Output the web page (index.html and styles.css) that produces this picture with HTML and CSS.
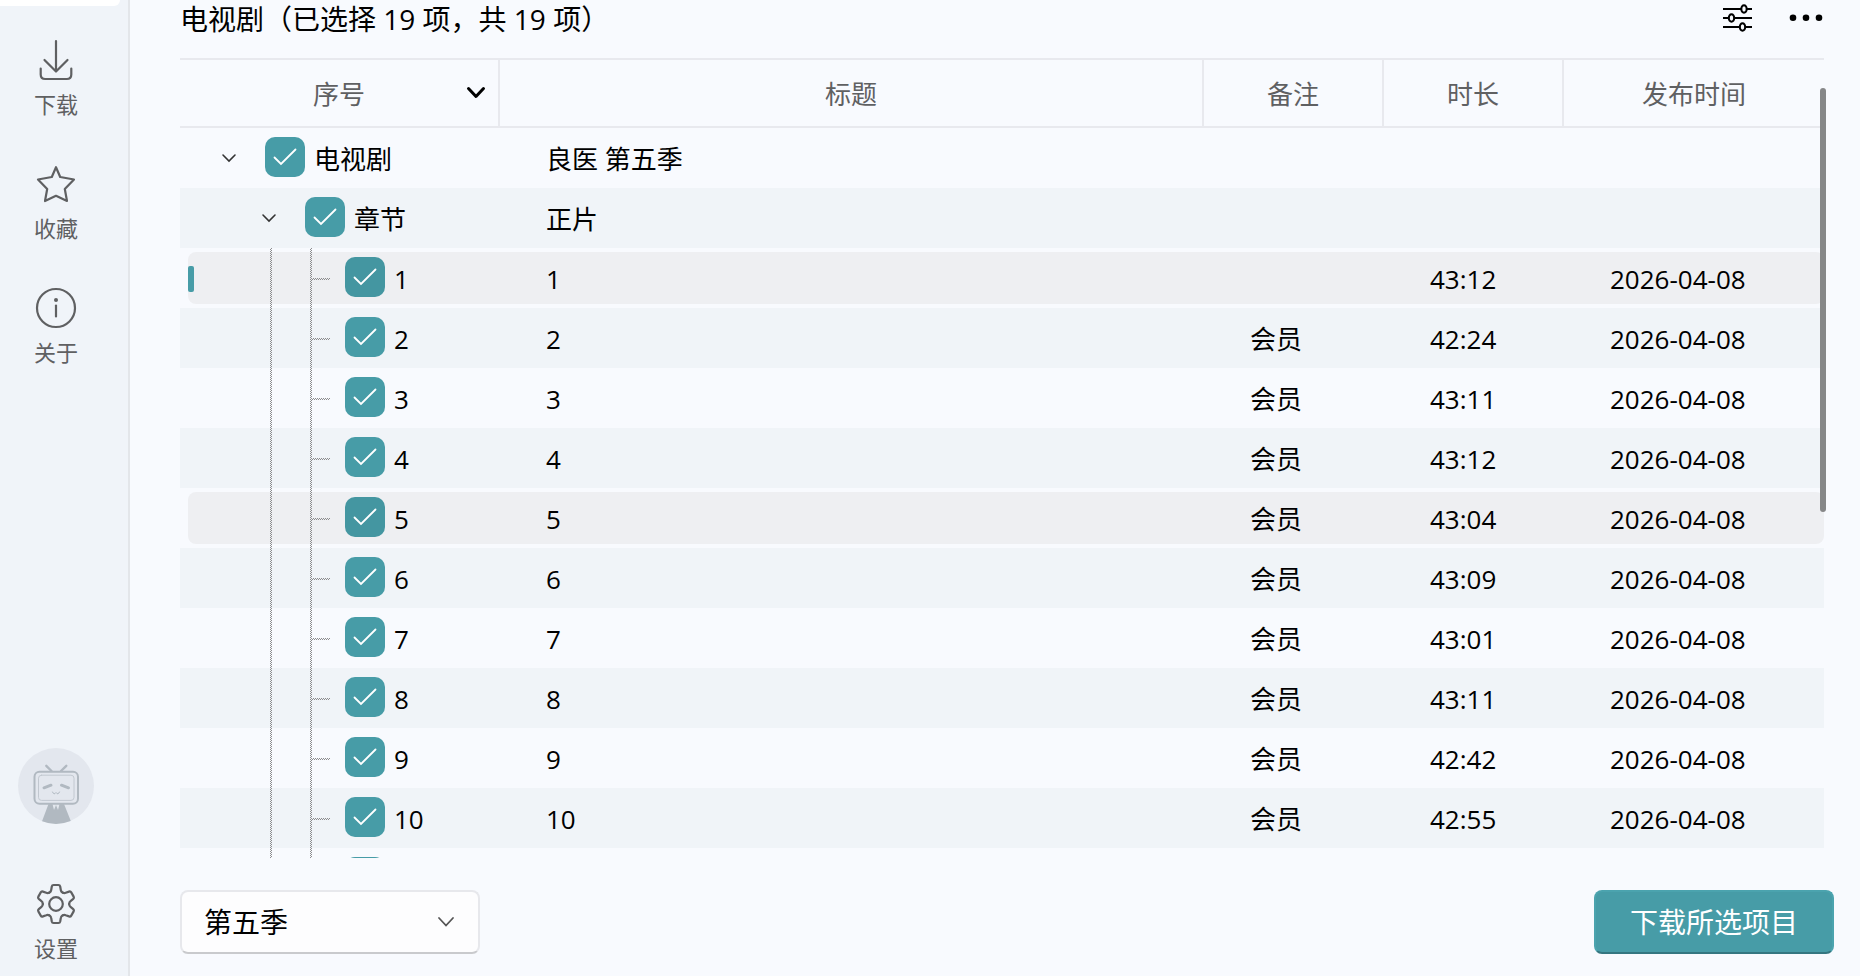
FILE: index.html
```html
<!DOCTYPE html>
<html lang="zh-CN">
<head>
<meta charset="utf-8">
<title>电视剧</title>
<link rel="stylesheet" href="styles.css">
</head>
<body>
<div class="app">
  <nav class="sidebar">
    <div class="nav-active"></div>
    <div class="nav-group">
      <button class="nav-item" type="button">
        <svg class="nav-icon" viewBox="0 0 40 40"><path d="M20 1V31M8.500 20 20 31.500 31.500 20M4.700 28.500V34.500Q4.700 39 9.200 39H30.800Q35.300 39 35.300 34.500V28.500"/></svg>
        <span>下载</span>
      </button>
      <button class="nav-item" type="button">
        <svg class="nav-icon" viewBox="0 0 40 40"><path d="M20 3.200 24.200 13 38 15.500 28.800 25 31 37 20 31.800 9 37 11.200 25 2 15.500 15.800 13Z"/></svg>
        <span>收藏</span>
      </button>
      <button class="nav-item" type="button">
        <svg class="nav-icon" viewBox="0 0 40 40"><circle cx="20" cy="20" r="19"/><circle class="solid" cx="20" cy="12" r="2"/><path d="M20 17.500V28.500"/></svg>
        <span>关于</span>
      </button>
    </div>
    <div class="nav-bottom">
      <button class="avatar" type="button" aria-label="账号">
        <svg viewBox="0 0 76 76">
          <defs><clipPath id="disc"><circle cx="38" cy="38" r="38"/></clipPath></defs>
          <circle cx="38" cy="38" r="38" fill="#e3e7ee"/>
          <g clip-path="url(#disc)" fill="none" stroke="#b1b9c1" stroke-linecap="round" stroke-linejoin="round">
            <path d="M30.500 56 23 76H54L46 56Z" fill="#b1b9c1" stroke="none"/>
            <path d="M34.500 56 36 62 38 57 40 62 41.500 56Z" fill="#e3e7ee" stroke="none"/>
            <path d="M28.300 17.800 33.500 23M48.300 17.800 43 23" stroke-width="2.400"/>
            <rect x="16.500" y="23.700" width="43.500" height="32" rx="5" fill="#e3e7ee" stroke-width="2"/>
            <rect x="20.500" y="27.200" width="35.500" height="25.200" rx="3" stroke-width="1" stroke="#c2c8d0"/>
            <path d="M26 39.800 33 37.200M43.500 37.200 50.500 39.800" stroke-width="3"/>
            <path d="M34.500 44Q36 47.500 38 44.500Q40 47.500 41.500 44" stroke-width="1"/>
          </g>
        </svg>
      </button>
      <button class="nav-item" type="button">
        <svg class="nav-icon" viewBox="-20 -20 40 40">
          <defs><path id="tooth" d="M-6.600-11.400Q-5-12.400-4.800-14L-4.200-17.500Q-3.900-19-2.400-19H2.400Q3.900-19 4.200-17.500L4.800-14Q5-12.400 6.600-11.400"/></defs>
          <use href="#tooth"/><use href="#tooth" transform="rotate(60)"/><use href="#tooth" transform="rotate(120)"/>
          <use href="#tooth" transform="rotate(180)"/><use href="#tooth" transform="rotate(240)"/><use href="#tooth" transform="rotate(300)"/>
          <circle r="6.800"/>
        </svg>
        <span>设置</span>
      </button>
    </div>
  </nav>

  <main class="content">
    <header class="topbar">
      <h1>电视剧（已选择 19 项，共 19 项）</h1>
      <div class="tools">
        <button class="tool" type="button" aria-label="筛选">
          <svg viewBox="0 0 40 32" fill="none" stroke="#000" stroke-width="2"><path d="M8 9H26M32 9H37M8 18H14M19 18H37M8 27H25M30 27H37"/><ellipse cx="29" cy="9" rx="2.700" ry="3.700"/><ellipse cx="16.500" cy="18" rx="2.700" ry="3.700"/><ellipse cx="27.500" cy="27" rx="2.700" ry="3.700"/></svg>
        </button>
        <button class="tool" type="button" aria-label="更多">
          <svg viewBox="0 0 40 32"><circle cx="9" cy="17.700" r="3.300"/><circle cx="22" cy="17.700" r="3.300"/><circle cx="35" cy="17.700" r="3.300"/></svg>
        </button>
      </div>
    </header>

    <section class="list">
      <div class="scroller">
        <table>
          <colgroup><col class="col-index"><col><col class="col-small"><col class="col-small"><col class="col-date"></colgroup>
          <thead>
            <tr>
              <th><span class="sortable">序号<svg class="sort" viewBox="0 0 20 14"><path d="M2.500 2.500 10 10.500 17.500 2.500"/></svg></span></th>
              <th>标题</th><th>备注</th><th>时长</th><th>发布时间</th>
            </tr>
          </thead>
          <tbody id="rows">
            <tr>
              <td><div class="node level-1"><svg class="chevron" viewBox="0 0 16 10"><path d="M2 2 8 8 14 2"/></svg><label><input type="checkbox" checked>电视剧</label></div></td>
              <td>良医 第五季</td><td></td><td></td><td></td>
            </tr>
            <tr>
              <td><div class="node level-2"><svg class="chevron" viewBox="0 0 16 10"><path d="M2 2 8 8 14 2"/></svg><label><input type="checkbox" checked>章节</label></div></td>
              <td>正片</td><td></td><td></td><td></td>
            </tr>
          </tbody>
        </table>
      </div>
      <div class="scrollbar"></div>
    </section>

    <footer class="actions">
      <select aria-label="季"><option>第五季</option></select>
      <button class="primary" type="button">下载所选项目</button>
    </footer>
  </main>
</div>
<script src="app.js"></script>
</body>
</html>
```

FILE: app.js
```js
const date = "2026-04-08";
const episodes = [
  [1, "", "43:12", date, "selected"],
  [2, "会员", "42:24", date],
  [3, "会员", "43:11", date],
  [4, "会员", "43:12", date],
  [5, "会员", "43:04", date, "hovered"],
  [6, "会员", "43:09", date],
  [7, "会员", "43:01", date],
  [8, "会员", "43:11", date],
  [9, "会员", "42:42", date],
  [10, "会员", "42:55", date],
  ["", "", "", ""]
];

document.getElementById("rows").insertAdjacentHTML("beforeend", episodes.map(([number, note, length, day, state = ""]) => `
  <tr class="${state}">
    <td><div class="node level-3"><i class="guide"></i><i class="guide"></i><i class="branch"></i><label><input type="checkbox" checked>${number}</label></div></td>
    <td>${number}</td><td>${note}</td><td>${length}</td><td>${day}</td>
  </tr>`).join(""));
```

FILE: styles.css
```css
:root {
  --accent: #479ca7;
  --page: #f8fafe;
  --panel: #f0f4f9;
  --line: #e8e9ee;
  --muted: #5f6062;
  --dots: repeating-conic-gradient(#8c8c8e 0 25%, transparent 0 50%) 0 0 / 2px 2px;
}

* { box-sizing: border-box; }

body {
  margin: 0;
  overflow: hidden;
  background: var(--page);
  color: #000;
  font: 26px/36px "Open Sans", "Noto Sans CJK SC", sans-serif;
}

button, select { font: inherit; border: 0; padding: 0; background: none; }
svg { display: block; }

.app { display: flex; height: 100vh; }

.sidebar {
  display: flex;
  flex-direction: column;
  flex: none;
  width: 130px;
  padding: 0 16px 12px 0;
  background: var(--panel);
  border-right: 2px solid #e3e6ea;
}

.nav-active {
  width: 120px;
  height: 6px;
  background: #fff;
  border-radius: 0 0 8px 0;
}

.nav-group, .nav-bottom { display: flex; flex-direction: column; align-items: center; }
.nav-group { gap: 44px; padding-top: 34px; }
.nav-bottom { gap: 60px; margin-top: auto; }

.nav-item {
  display: flex;
  flex-direction: column;
  align-items: center;
  gap: 8px;
  color: var(--muted);
  font-size: 22px;
  line-height: 32px;
}

.nav-icon {
  width: 40px;
  height: 40px;
  overflow: visible;
  fill: none;
  stroke: var(--muted);
  stroke-width: 2.2;
  stroke-linecap: round;
  stroke-linejoin: round;
}

.nav-icon .solid { fill: var(--muted); stroke: none; }
.avatar { width: 76px; height: 76px; }

.content {
  display: flex;
  flex-direction: column;
  flex: 1;
  min-width: 0;
  padding: 0 26px 22px 50px;
}

.topbar {
  display: flex;
  justify-content: space-between;
  height: 58px;
  padding-right: 10px;
}

h1 { margin: 0; font-size: 28px; line-height: 38px; font-weight: 400; }
.tools { display: flex; gap: 29px; }
.tool { width: 40px; height: 32px; }

.list {
  position: relative;
  flex: 1;
  min-height: 0;
  margin-right: 10px;
}

.scroller { height: 100%; overflow: hidden; isolation: isolate; }

table {
  width: 100%;
  table-layout: fixed;
  border-collapse: separate;
  border-spacing: 0;
}

.col-index { width: 320px; }
.col-small { width: 180px; }
.col-date { width: 260px; }

th {
  height: 70px;
  padding: 2px 0 0;
  border: solid var(--line);
  border-width: 2px 2px 2px 0;
  color: var(--muted);
  font-weight: 400;
}

th:last-child { border-right: 0; }

.sortable { position: relative; display: block; }

.sort {
  position: absolute;
  top: 10px;
  right: 12px;
  width: 20px;
  height: 14px;
  fill: none;
  stroke: #000;
  stroke-width: 3;
  stroke-linecap: round;
  stroke-linejoin: round;
}

td { height: 60px; padding: 2px 0 0 46px; }
td:first-child { padding: 0; }
tbody tr { position: relative; }
tbody tr:nth-child(even) { background: #f0f4f8; }

.selected td:first-child::before, .hovered td:first-child::before {
  content: "";
  position: absolute;
  z-index: -1;
  inset: 4px 0 4px 8px;
  border-radius: 8px;
  background: #eeeff2;
}

.selected td:first-child::after {
  content: "";
  position: absolute;
  left: 8px;
  top: 18px;
  width: 6px;
  height: 26px;
  border-radius: 2px;
  background: var(--accent);
}

.node { display: flex; align-items: center; height: 60px; }
.level-1 { padding-left: 41px; }
.level-2 { padding-left: 81px; }
.level-3 { padding-left: 90px; }

.chevron {
  width: 16px;
  height: 10px;
  margin-right: 28px;
  fill: none;
  stroke: #333;
  stroke-width: 1.6;
  stroke-linecap: round;
}

.guide { width: 2px; height: 60px; background: var(--dots); }
.guide + .guide { margin-left: 38px; }
.branch { width: 18px; height: 2px; margin: 2px 15px 0 0; background: var(--dots); }

.node label { display: flex; align-items: flex-end; gap: 9px; height: 40px; margin-bottom: 2px; }

input {
  appearance: none;
  width: 40px;
  height: 40px;
  margin: 0;
  border-radius: 10px;
  background: var(--accent) url("data:image/svg+xml,%3Csvg xmlns='http://www.w3.org/2000/svg' viewBox='0 0 40 40'%3E%3Cpath d='M9.500 20.500 16 27 30.500 12.500' fill='none' stroke='white' stroke-width='1.800' stroke-linecap='round'/%3E%3C/svg%3E");
}

.selected input, .hovered input { background-color: #4496a1; }

.scrollbar {
  position: absolute;
  top: 30px;
  right: -2px;
  width: 6px;
  height: 53%;
  border-radius: 3px;
  background: #868788;
}

.actions { display: flex; justify-content: space-between; padding-top: 32px; }

select {
  appearance: none;
  width: 300px;
  height: 64px;
  padding: 0 22px;
  border: 2px solid #e7e8ec;
  border-bottom-color: #c9cacd;
  border-radius: 8px;
  color: #000;
  font-size: 28px;
  background: #fdfdfe url("data:image/svg+xml,%3Csvg xmlns='http://www.w3.org/2000/svg' viewBox='0 0 18 12'%3E%3Cpath d='M2 2 9 9.500 16 2' fill='none' stroke='%23555' stroke-width='1.800' stroke-linecap='round'/%3E%3C/svg%3E") right 23px center / 18px 12px no-repeat;
}

.primary {
  width: 240px;
  height: 64px;
  border: 2px solid #4ba3ae;
  border-bottom-color: #357680;
  border-radius: 8px;
  background: var(--accent);
  color: #fff;
  font-size: 28px;
}
```
